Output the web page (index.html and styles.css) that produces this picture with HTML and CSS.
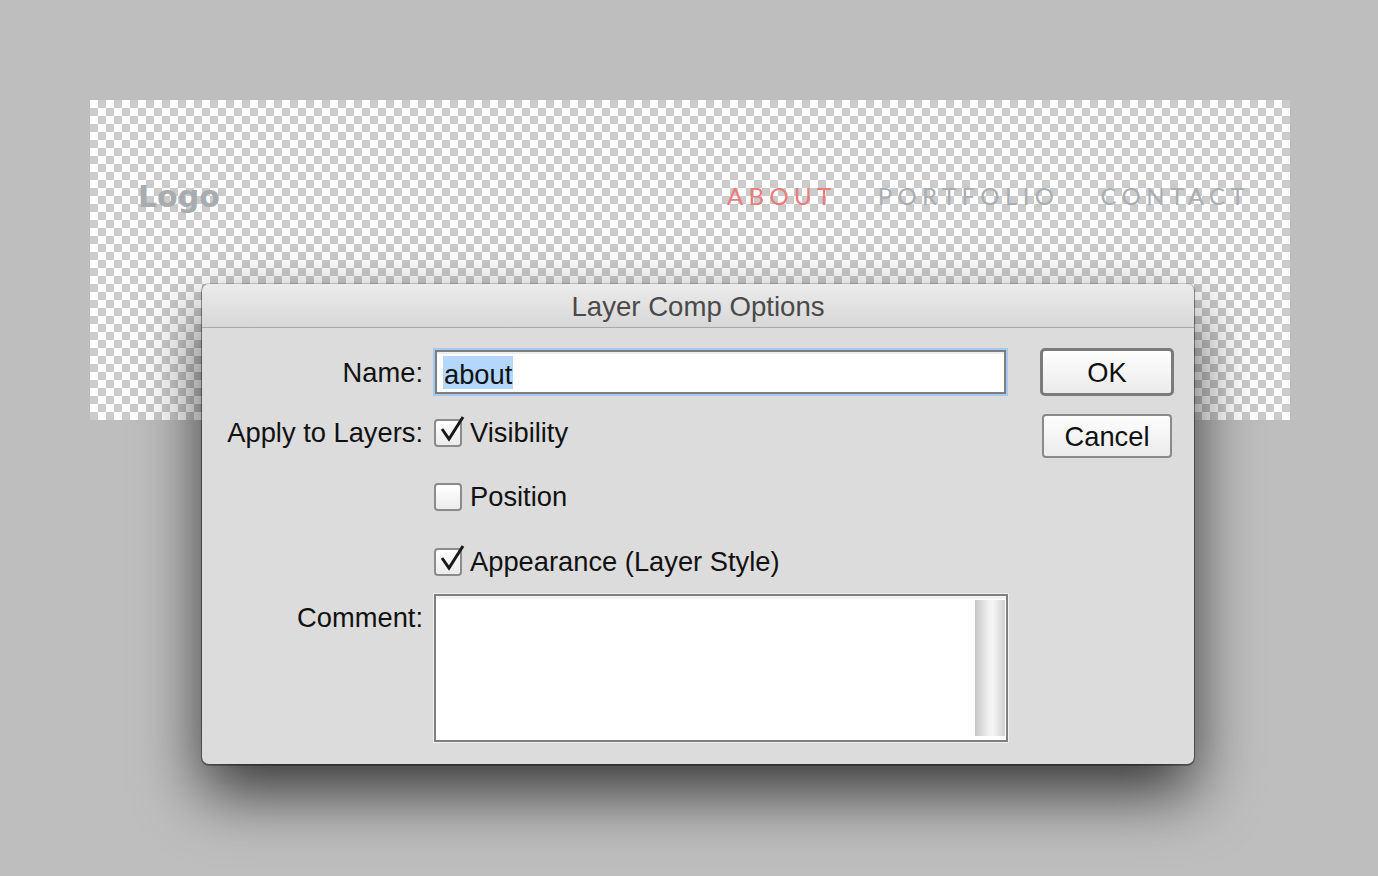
FILE: index.html
```html
<!DOCTYPE html>
<html lang="en">
<head>
<meta charset="utf-8">
<title>Layer Comp Options</title>
<link rel="stylesheet" href="styles.css">
</head>
<body>
<div class="scene">
  <div class="canvas">
    <header class="site-header">
      <div class="logo">Logo</div>
      <nav class="nav">
        <a class="nav-item active">ABOUT</a>
        <a class="nav-item">PORTFOLIO</a>
        <a class="nav-item">CONTACT</a>
      </nav>
    </header>
  </div>

  <div class="dialog">
    <div class="titlebar">Layer Comp Options</div>
    <div class="dialog-body">
      <div class="form">
        <div class="label label-name">Name:</div>
        <div class="field"><span class="sel">about</span></div>

        <div class="label label-apply">Apply to Layers:</div>
        <label class="check-row">
          <span class="box">
            <svg class="tick" width="30" height="30" viewBox="0 0 30 30"><polyline points="6,13 13,23 27,1" fill="none" stroke="#1a1a1a" stroke-width="3" stroke-linejoin="miter" stroke-linecap="butt"/></svg>
          </span>
          <span class="check-text">Visibility</span>
        </label>

        <div class="label"></div>
        <label class="check-row">
          <span class="box"></span>
          <span class="check-text">Position</span>
        </label>

        <div class="label"></div>
        <label class="check-row">
          <span class="box">
            <svg class="tick" width="30" height="30" viewBox="0 0 30 30"><polyline points="6,13 13,23 27,1" fill="none" stroke="#1a1a1a" stroke-width="3" stroke-linejoin="miter" stroke-linecap="butt"/></svg>
          </span>
          <span class="check-text">Appearance (Layer Style)</span>
        </label>

        <div class="label label-comment">Comment:</div>
        <div class="textarea">
          <div class="text-space"></div>
          <div class="scroll-track"></div>
        </div>
      </div>

      <div class="buttons">
        <div class="btn btn-default">OK</div>
        <div class="btn btn-cancel">Cancel</div>
      </div>
    </div>
  </div>
</div>
</body>
</html>
```

FILE: styles.css
```css
html, body {
  margin: 0;
  padding: 0;
}

body {
  width: 1378px;
  height: 876px;
  overflow: hidden;
  background: #bebebe;
  font-family: "Liberation Sans", Arial, sans-serif;
}

.scene {
  position: relative;
  width: 1378px;
  height: 876px;
  padding: 100px 0 0 90px;
  box-sizing: border-box;
}

.canvas {
  width: 1200px;
  height: 320px;
  background-color: #fff;
  background-image: conic-gradient(#cbcbcb 0 25%, #fff 0 50%, #cbcbcb 0 75%, #fff 0);
  background-size: 16px 16px;
}

.site-header {
  display: flex;
  justify-content: space-between;
  align-items: center;
  height: 40px;
  padding: 76px 40px 0 48px;
}

.logo {
  font-family: "DejaVu Sans", "Lato", sans-serif;
  font-weight: 700;
  font-size: 30px;
  letter-spacing: 0;
  color: #a8acb1;
  line-height: 40px;
  margin-top: 2px;
}

.nav {
  display: flex;
  align-items: center;
  gap: 41px;
}

.nav-item {
  font-family: "Lato", sans-serif;
  font-weight: 400;
  font-size: 24px;
  letter-spacing: 5.4px;
  color: #a9aeb4;
  line-height: 40px;
}

.nav-item.active {
  color: #ea7c7c;
}

/* Dialog overlaid on canvas */
.dialog {
  position: absolute;
  left: 202px;
  top: 284px;
  width: 992px;
  height: 480px;
  background: #dcdcdc;
  border-radius: 7px;
  box-shadow: 0 0 0 1px rgba(0, 0, 0, 0.16), 0 1px 0 1px rgba(0, 0, 0, 0.28), 0 28px 64px rgba(0, 0, 0, 0.72);
  overflow: hidden;
  color: #111;
  font-size: 27.3px;
}

.titlebar {
  height: 43px;
  line-height: 46px;
  text-align: center;
  font-size: 27.6px;
  color: #4a4a4a;
  background: linear-gradient(#ececec, #d7d7d7);
  border-bottom: 1px solid #a9a9a9;
}

.dialog-body {
  display: flex;
  gap: 32px;
  padding: 20px 0 22px 0;
}

.form {
  display: grid;
  grid-template-columns: 221px 575px;
  grid-template-rows: 53px 64px 64px 65px 148px;
  column-gap: 10px;
}

.label {
  text-align: right;
  white-space: nowrap;
  display: flex;
  align-items: center;
  justify-content: flex-end;
}

.label-name {
  height: 50px;
  align-self: start;
}

.label-comment {
  align-self: start;
  height: 32px;
  margin-top: 8px;
}

.field {
  height: 48px;
  box-sizing: border-box;
  border: 2px solid #a3c9f0;
  background: #fff;
  box-shadow: inset 0 0 0 2px #7e7e7e, inset 0 4px 0 0 #eeeeee;
  padding: 6px 0 0 8px;
  line-height: 34px;
}

.sel {
  display: inline-block;
  background: #b3d7ff;
  height: 33px;
  line-height: 37px;
  padding: 0 1px 0 1px;
}

.check-row {
  display: flex;
  align-items: center;
  gap: 8px;
}

.box {
  position: relative;
  width: 28px;
  height: 28px;
  box-sizing: border-box;
  margin-left: 1px;
  border: 2px solid #8b8b8b;
  border-radius: 4px;
  background: linear-gradient(#ffffff, #ececec);
}

.tick {
  position: absolute;
  left: 0;
  top: -5px;
}

.check-text {
  line-height: 32px;
}

.textarea {
  display: flex;
  height: 148px;
  box-sizing: border-box;
  border: 2px solid #7f7f7f;
  box-shadow: 0 0 0 1px #efefef, inset 0 3px 0 0 #f2f2f2;
  background: #fff;
  padding: 4px 1px 4px 3px;
  margin-left: 1px;
}

.text-space {
  flex: 1;
}

.scroll-track {
  width: 30px;
  background: linear-gradient(to right, #c6c6c6, #efefef 45%, #f4f4f4 60%, #d2d2d2);
}

.buttons {
  display: flex;
  flex-direction: column;
  align-items: center;
  width: 134px;
}

.btn {
  box-sizing: border-box;
  display: flex;
  align-items: center;
  justify-content: center;
  background: linear-gradient(#fefefe, #ebebeb);
  color: #111;
  padding-top: 2px;
}

.btn-default {
  width: 134px;
  height: 48px;
  border: 3px solid #7b7b7b;
  border-radius: 5px;
}

.btn-cancel {
  width: 130px;
  height: 44px;
  margin-top: 18px;
  border: 2px solid #8a8a8a;
  border-radius: 4px;
}
```
